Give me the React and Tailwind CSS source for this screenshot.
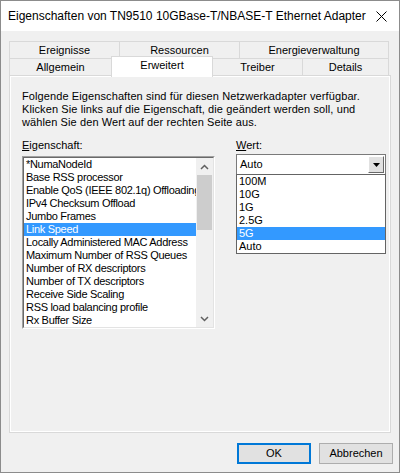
const items = [
  '*NumaNodeId',
  'Base RSS processor',
  'Enable QoS (IEEE 802.1q) Offloading',
  'IPv4 Checksum Offload',
  'Jumbo Frames',
  'Link Speed',
  'Locally Administered MAC Address',
  'Maximum Number of RSS Queues',
  'Number of RX descriptors',
  'Number of TX descriptors',
  'Receive Side Scaling',
  'RSS load balancing profile',
  'Rx Buffer Size',
];

const speeds = ['100M', '10G', '1G', '2.5G', '5G', 'Auto'];

const font = "font-['Liberation_Sans',Arial,sans-serif]";

const Tab = ({ w, children }) => (
  <div
    className={`flex h-[17px] items-center justify-center border-l border-r border-t border-[#d9d9d9] bg-[#f0f0f0] -ml-px first:ml-0 ${w}`}
  >
    {children}
  </div>
);

const Chevron = ({ up }) => (
  <svg width="9" height="6" viewBox="0 0 9 6" fill="none" stroke="#606060" strokeWidth="1.5">
    <path d={up ? 'M1 5 4.5 1.5 8 5' : 'M1 1 4.5 4.5 8 1'} />
  </svg>
);

export default function App() {
  return (
    <div className={`flex h-[473px] w-[400px] flex-col border border-[#8c8c8c] bg-[#f0f0f0] text-[11px] leading-[13px] text-black ${font}`}>
      {/* title bar */}
      <div className="flex h-[30px] shrink-0 items-center bg-white pl-[7px] pr-[12px]">
        <span className="whitespace-nowrap text-[12px]">Eigenschaften von TN9510 10GBase-T/NBASE-T Ethernet Adapter</span>
        <svg className="ml-auto shrink-0" width="11" height="11" viewBox="0 0 11 11" stroke="#000" strokeWidth="1">
          <path d="M0.5 0.5 10.5 10.5M10.5 0.5 0.5 10.5" />
        </svg>
      </div>

      <div className="flex flex-1 flex-col pl-[8px] pt-[10px]">
        {/* tabs */}
        <div className="flex w-[380px]">
          <Tab w="w-[111px]">Ereignisse</Tab>
          <Tab w="w-[121px]">Ressourcen</Tab>
          <Tab w="w-[150px]">Energieverwaltung</Tab>
        </div>
        <div className="flex h-[17px] w-[380px]">
          <Tab w="w-[103px]">Allgemein</Tab>
          <div className="relative z-10 -mb-[2px] -ml-px -mt-[2px] flex h-[21px] w-[102px] items-start justify-center border-l border-r border-t border-[#d9d9d9] bg-white pt-[2px]">
            Erweitert
          </div>
          <Tab w="w-[91px]">Treiber</Tab>
          <Tab w="w-[87px]">Details</Tab>
        </div>

        {/* panel */}
        <div className="h-[358px] w-[382px] border border-[#d9d9d9] pl-[12px] pt-[14px] shadow-[inset_1px_1px_0_#fff,inset_-1px_-1px_0_#fff]">
          <p className="tracking-[0.1px]">
            Folgende Eigenschaften sind für diesen Netzwerkadapter verfügbar.
            <br />
            Klicken Sie links auf die Eigenschaft, die geändert werden soll, und
            <br />
            wählen Sie den Wert auf der rechten Seite aus.
          </p>

          <div className="mt-[10px] flex gap-[21px]">
            <div className="w-[193px]">
              <div>
                <u>E</u>igenschaft:
              </div>
              <div className="mt-[4px] h-[173px] border border-b-white border-l-[#a0a0a0] border-r-white border-t-[#a0a0a0]">
                <div className="flex h-full border border-b-[#e3e3e3] border-l-[#696969] border-r-[#e3e3e3] border-t-[#696969] bg-white">
                  <ul className="min-w-0 flex-1 overflow-hidden tracking-[-0.3px]">
                    {items.map((it) => (
                      <li
                        key={it}
                        className={`h-[13px] whitespace-nowrap pl-[2px] ${it === 'Link Speed' ? 'bg-[#3399ff] text-white' : ''}`}
                      >
                        {it}
                      </li>
                    ))}
                  </ul>
                  <div className="flex w-[17px] shrink-0 flex-col bg-[#f0f0f0]">
                    <div className="flex h-[17px] items-center justify-center">
                      <Chevron up />
                    </div>
                    <div className="h-[55px] mx-px bg-[#cdcdcd]" />
                    <div className="flex-1" />
                    <div className="flex h-[17px] items-center justify-center">
                      <Chevron />
                    </div>
                  </div>
                </div>
              </div>
            </div>

            <div className="w-[150px]">
              <div>
                <u>W</u>ert:
              </div>
              <div className="relative mt-[2px]">
                <div className="flex h-[21px] items-center border border-[#7a7a7a] bg-white pl-[2px] pr-px">
                  <div className="flex h-[17px] flex-1 items-center pl-px">Auto</div>
                  <div className="flex h-[17px] w-[16px] items-center justify-center border border-b-[#696969] border-l-white border-r-[#696969] border-t-white bg-[#e1e1e1]">
                    <svg width="7" height="4" viewBox="0 0 7 4">
                      <path d="M0 0h7L3.5 4z" fill="#000" />
                    </svg>
                  </div>
                </div>
                <ul className="absolute left-0 top-[20px] z-20 w-[150px] border border-[#646464] bg-white">
                  {speeds.map((s) => (
                    <li key={s} className={`h-[13px] pl-[2px] ${s === '5G' ? 'bg-[#3399ff] text-white' : ''}`}>
                      {s}
                    </li>
                  ))}
                </ul>
              </div>
            </div>
          </div>
        </div>

        {/* buttons */}
        <div className="mt-[10px] flex w-[384px] justify-end gap-[8px]">
          <button className="h-[21px] w-[74px] border-2 border-[#0078d7] bg-[#e1e1e1]">OK</button>
          <button className="h-[21px] w-[74px] border border-[#adadad] bg-[#e1e1e1]">Abbrechen</button>
        </div>
      </div>
    </div>
  );
}
